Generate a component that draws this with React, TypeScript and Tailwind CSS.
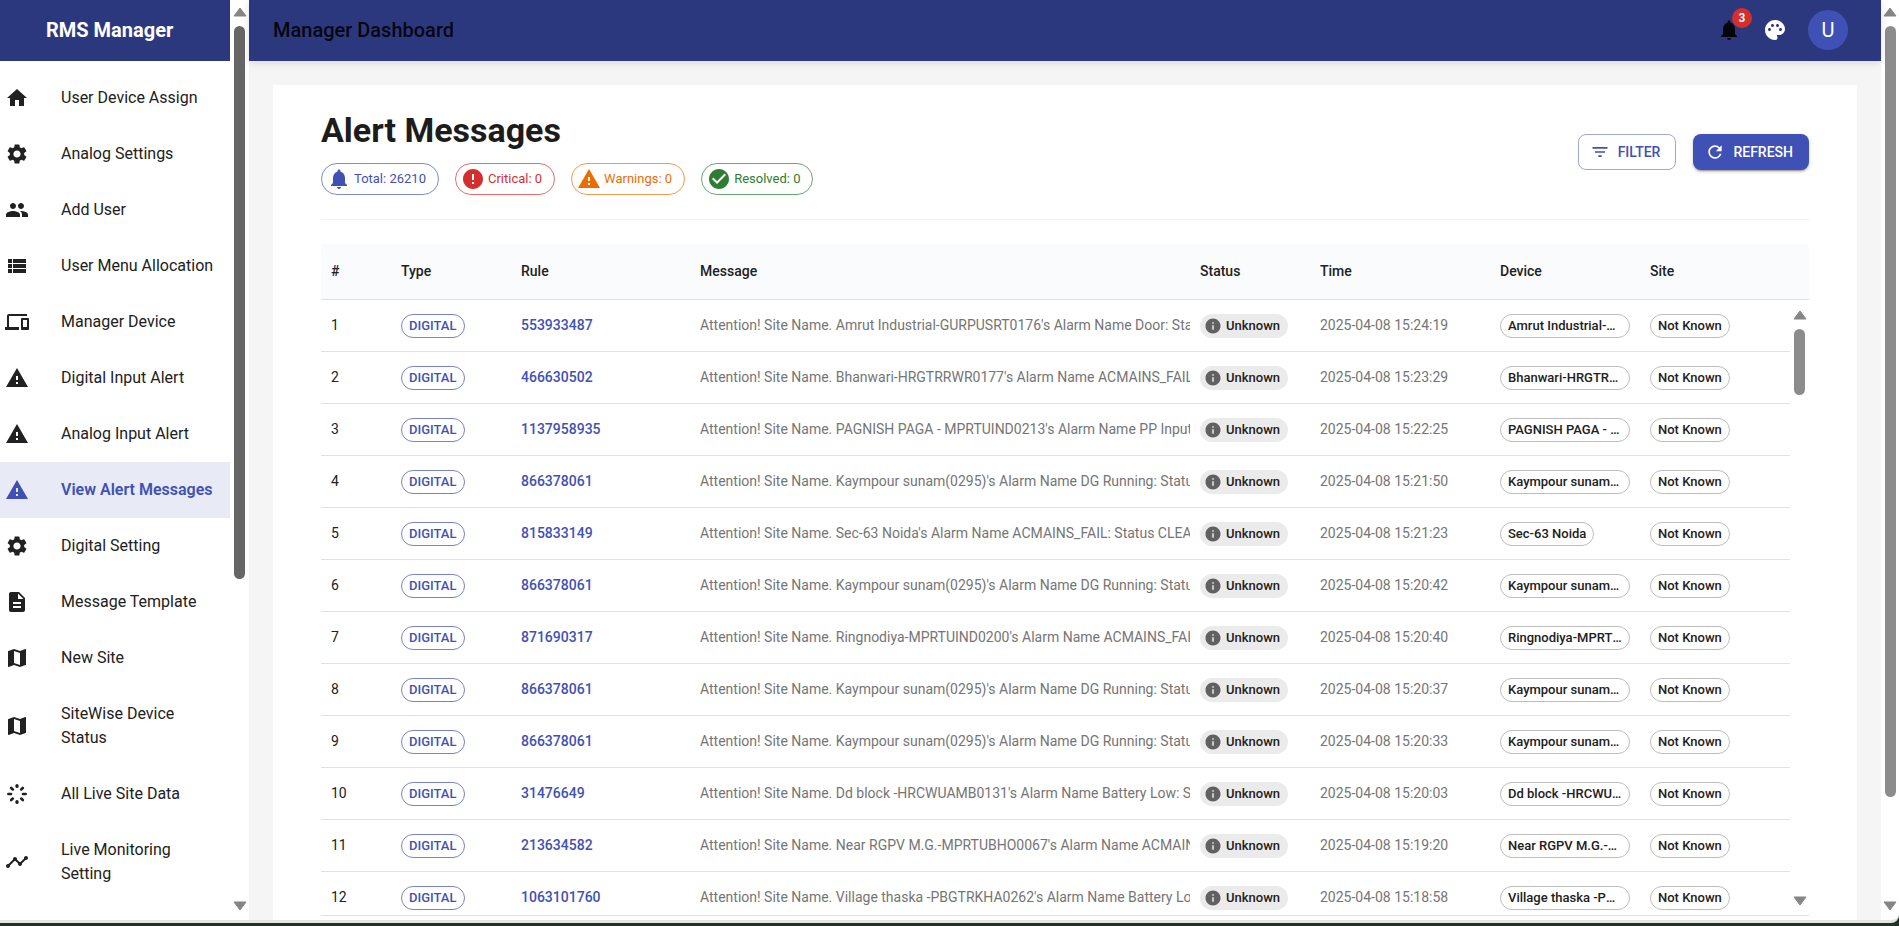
import React from "react";
import {
  MdHome, MdSettings, MdPeople, MdViewList, MdDevices, MdWarning, MdDescription, MdMap, MdTimeline,
  MdNotifications, MdPalette, MdFilterList, MdRefresh, MdError, MdCheckCircle, MdInfo,
} from "react-icons/md";

function BurstIcon({ size, className }: { size: number; className?: string }) {
  return (
    <svg width={size} height={size} viewBox="0 0 24 24" className={className} fill="none" stroke="currentColor" strokeWidth="2.7" strokeLinecap="round">
      <line x1="12" y1="3.6" x2="12" y2="4.4" strokeWidth="3.2" />
      <line x1="12" y1="19.6" x2="12" y2="20.4" strokeWidth="3.2" />
      <line x1="3.4" y1="12" x2="6" y2="12" />
      <line x1="18" y1="12" x2="20.6" y2="12" />
      <line x1="6.2" y1="6" x2="7.8" y2="7.4" />
      <line x1="17.8" y1="6" x2="16.2" y2="7.4" />
      <line x1="6.2" y1="18" x2="7.8" y2="16.6" />
      <line x1="17.8" y1="18" x2="16.2" y2="16.6" />
    </svg>
  );
}

const menu = [
  { label: "User Device Assign", Icon: MdHome },
  { label: "Analog Settings", Icon: MdSettings },
  { label: "Add User", Icon: MdPeople },
  { label: "User Menu Allocation", Icon: MdViewList },
  { label: "Manager Device", Icon: MdDevices },
  { label: "Digital Input Alert", Icon: MdWarning },
  { label: "Analog Input Alert", Icon: MdWarning },
  { label: "View Alert Messages", Icon: MdWarning, active: true },
  { label: "Digital Setting", Icon: MdSettings },
  { label: "Message Template", Icon: MdDescription },
  { label: "New Site", Icon: MdMap },
  { label: "SiteWise Device Status", Icon: MdMap },
  { label: "All Live Site Data", Icon: BurstIcon },
  { label: "Live Monitoring Setting", Icon: MdTimeline },
];

const rows = [
  { rule: "553933487", site: "Amrut Industrial-GURPUSRT0176", alarm: "Door", time: "2025-04-08 15:24:19" },
  { rule: "466630502", site: "Bhanwari-HRGTRRWR0177", alarm: "ACMAINS_FAIL", time: "2025-04-08 15:23:29" },
  { rule: "1137958935", site: "PAGNISH PAGA - MPRTUIND0213", alarm: "PP Input", time: "2025-04-08 15:22:25" },
  { rule: "866378061", site: "Kaympour sunam(0295)", alarm: "DG Running", time: "2025-04-08 15:21:50" },
  { rule: "815833149", site: "Sec-63 Noida", alarm: "ACMAINS_FAIL", time: "2025-04-08 15:21:23" },
  { rule: "866378061", site: "Kaympour sunam(0295)", alarm: "DG Running", time: "2025-04-08 15:20:42" },
  { rule: "871690317", site: "Ringnodiya-MPRTUIND0200", alarm: "ACMAINS_FAIL", time: "2025-04-08 15:20:40" },
  { rule: "866378061", site: "Kaympour sunam(0295)", alarm: "DG Running", time: "2025-04-08 15:20:37" },
  { rule: "866378061", site: "Kaympour sunam(0295)", alarm: "DG Running", time: "2025-04-08 15:20:33" },
  { rule: "31476649", site: "Dd block -HRCWUAMB0131", alarm: "Battery Low", time: "2025-04-08 15:20:03" },
  { rule: "213634582", site: "Near RGPV M.G.-MPRTUBHO0067", alarm: "ACMAINS_FAIL", time: "2025-04-08 15:19:20" },
  { rule: "1063101760", site: "Village thaska -PBGTRKHA0262", alarm: "Battery Low", time: "2025-04-08 15:18:58" },
];

const summary = [
  { label: "Total: 26210", Icon: MdNotifications, cls: "border-[#7e8bce] text-[#3f51b5]" },
  { label: "Critical: 0", Icon: MdError, cls: "border-[#e36d6d] text-[#d32f2f]" },
  { label: "Warnings: 0", Icon: MdWarning, cls: "border-[#f39a4f] text-[#ed6c02]" },
  { label: "Resolved: 0", Icon: MdCheckCircle, cls: "border-[#6ea671] text-[#2e7d32]" },
];

const headers = ["#", "Type", "Rule", "Message", "Status", "Time", "Device", "Site"];
const gridCols = "grid grid-cols-[70px_120px_179px_500px_120px_180px_150px_1fr]";

function Arrow({ down }: { down?: boolean }) {
  return (
    <svg width="14" height="10" viewBox="0 0 14 10" className="shrink-0 fill-[#858585] stroke-[#858585]" strokeWidth="1" strokeLinejoin="round">
      <polygon points={down ? "1,1 13,1 7,9" : "1,9 13,9 7,1"} />
    </svg>
  );
}

function Scrollbar({ thumb, color, width, top, gap, bottom }: { thumb: string; color: string; width: string; top: string; gap: string; bottom: string }) {
  return (
    <div className={`flex h-full shrink-0 flex-col items-center ${width} ${top} ${bottom}`}>
      <Arrow />
      <div className={`w-[11px] shrink-0 rounded-full ${gap} ${thumb} ${color}`} />
      <div className="flex-1" />
      <Arrow down />
    </div>
  );
}

function Sidebar() {
  return (
    <aside className="flex h-full w-[230px] shrink-0 flex-col overflow-hidden bg-white">
      <div className="flex h-[61px] shrink-0 items-center bg-[#2c387e] pb-[1px] pl-[46px] text-[20px] font-bold text-white">RMS Manager</div>
      <nav className="flex flex-col pt-[9px]">
        {menu.map(({ label, Icon, active }) => (
          <div
            key={label}
            className={`flex items-center py-4 pl-[5px] pr-4 text-[16px] leading-6 ${active ? "bg-[#e8eaf6] font-semibold text-[#3f51b5]" : "text-[#212121]"}`}
          >
            <Icon size={24} className={`mr-8 shrink-0 ${active ? "text-[#3f51b5]" : "text-[#212121]"}`} />
            <span>{label}</span>
          </div>
        ))}
      </nav>
    </aside>
  );
}

function AppBar() {
  return (
    <header className="relative z-10 flex h-[61px] shrink-0 items-center justify-between bg-[#2c387e] pb-[2px] pl-6 pr-[33px] shadow-[0_2px_8px_rgba(0,0,0,0.12)]">
      <h1 className="text-[20px] font-medium text-black/90">Manager Dashboard</h1>
      <div className="flex items-center">
        <div className="relative flex h-10 w-10 items-center justify-center text-black/90">
          <MdNotifications size={24} />
          <span className="absolute left-[23px] top-[-2px] flex h-5 w-5 items-center justify-center rounded-full bg-[#d32f2f] text-[12px] font-semibold text-white">3</span>
        </div>
        <div className="ml-[6px] flex h-10 w-10 items-center justify-center text-white">
          <MdPalette size={24} />
        </div>
        <div className="ml-[13px] flex h-10 w-10 items-center justify-center rounded-full bg-[#3f51b5] text-[20px] text-white">U</div>
      </div>
    </header>
  );
}

function PageHeader() {
  return (
    <div className="flex items-center justify-between">
      <div>
        <h2 className="text-[34px] font-bold leading-[42px] text-[#1c1c1c]">Alert Messages</h2>
        <div className="mt-3 flex gap-4">
          {summary.map(({ label, Icon, cls }) => (
            <span key={label} className={`flex h-8 items-center rounded-full border pl-[5px] pr-3 text-[13px] ${cls}`}>
              <Icon size={24} className="mr-[3px] shrink-0" />
              {label}
            </span>
          ))}
        </div>
      </div>
      <div className="flex gap-[17px]">
        <button className="flex h-9 items-center rounded-lg border border-[#9fa8da] pl-[11px] pr-[15px] text-[14px] font-medium text-[#3f51b5]">
          <MdFilterList size={20} className="mr-2" />
          FILTER
        </button>
        <button className="flex h-9 items-center rounded-lg bg-[#3f51b5] pl-3 pr-4 text-[14px] font-medium text-white shadow-[0_3px_1px_-2px_rgba(0,0,0,0.2),0_2px_2px_0_rgba(0,0,0,0.14),0_1px_5px_0_rgba(0,0,0,0.12)]">
          <MdRefresh size={20} className="mr-2" />
          REFRESH
        </button>
      </div>
    </div>
  );
}

function AlertTable() {
  return (
    <div className="mt-6 flex h-[672px] flex-col overflow-hidden border-b border-[#e0e0e0]">
      <div className={`${gridCols} h-14 shrink-0 items-center border-b border-[#e0e0e0] bg-[#fafbfd] text-[14px] font-medium text-[#212121]`}>
        {headers.map((h) => (
          <div key={h} className="pl-[10px]">{h}</div>
        ))}
      </div>
      <div className="flex min-h-0 flex-1">
        <div className="min-w-0 flex-1 overflow-hidden">
          {rows.map((r, i) => (
            <div key={i} className={`${gridCols} h-[52px] items-center border-b border-[#e0e0e0] text-[14px]`}>
              <div className="pl-[10px] text-[#212121]">{i + 1}</div>
              <div className="flex pl-[10px]">
                <span className="flex h-6 items-center rounded-full border border-[#7683c9] px-[7px] text-[13px] font-medium text-[#3f51b5]">DIGITAL</span>
              </div>
              <div className="pl-[10px] font-medium text-[#3f51b5]">{r.rule}</div>
              <div className="overflow-hidden whitespace-nowrap pl-[10px] text-[#757575]">
                {`Attention! Site Name. ${r.site}'s Alarm Name ${r.alarm}: Status CLEARED`}
              </div>
              <div className="flex pl-[10px]">
                <span className="flex h-6 items-center rounded-full bg-[#ebebeb] pl-1 pr-2 text-[13px] font-medium text-[#212121]">
                  <MdInfo size={18} className="mr-1 shrink-0 text-[#616161]" />
                  Unknown
                </span>
              </div>
              <div className="pl-[10px] text-[#757575]">{r.time}</div>
              <div className="flex pl-[10px]">
                <span className="flex h-6 max-w-[130px] items-center rounded-full border border-[#bdbdbd] px-[7px] text-[13px] font-medium text-[#212121]">
                  <span className="truncate">{r.site}</span>
                </span>
              </div>
              <div className="flex pl-[10px]">
                <span className="flex h-6 items-center rounded-full border border-[#bdbdbd] px-[7px] text-[13px] font-medium text-[#212121]">Not Known</span>
              </div>
            </div>
          ))}
        </div>
        <Scrollbar width="w-[19px]" top="pt-[10px]" gap="mt-[9px]" bottom="pb-[9px]" thumb="h-[66px]" color="bg-[#8c8c8c]" />
      </div>
    </div>
  );
}

export default function App() {
  return (
    <div className="flex h-[926px] flex-col bg-[#1c3327] font-[Roboto,sans-serif]">
      <div className="flex h-[923px] shrink-0 overflow-hidden rounded-br-lg border-b-[3px] border-[#e4e4e4] bg-white">
        <Sidebar />
        <Scrollbar width="w-[19px]" top="pt-[7px]" gap="mt-[9px]" bottom="pb-[9px]" thumb="h-[553px]" color="bg-[#666666]" />
        <div className="flex min-w-0 flex-1 flex-col">
          <AppBar />
          <main className="min-h-0 flex-1 overflow-hidden bg-[#f5f5f5] px-6 pt-6">
            <div className="h-[900px] bg-white px-12 pt-6">
              <PageHeader />
              <div className="mt-6 border-t border-[#f0f0f0]" />
              <AlertTable />
            </div>
          </main>
        </div>
        <Scrollbar width="w-[18px]" top="pt-[7px]" gap="mt-[9px]" bottom="pb-[9px]" thumb="h-[771px]" color="bg-[#8c8c8c]" />
      </div>
    </div>
  );
}
